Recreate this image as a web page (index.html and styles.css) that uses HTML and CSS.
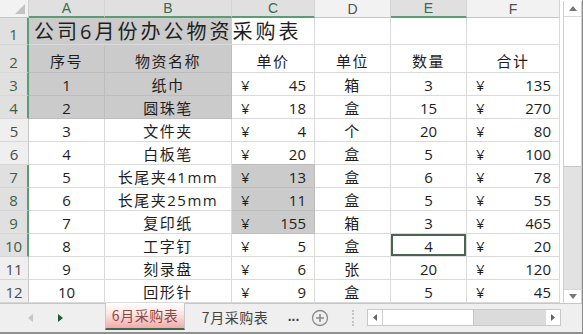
FILE: index.html
```html
<!DOCTYPE html>
<html lang="zh">
<head>
<meta charset="utf-8">
<title>公司6月份办公物资采购表</title>
<link rel="stylesheet" href="styles.css">
</head>
<body>
<div class="app">
  <div class="main">
    <div class="sheet">
      <div class="row hrow">
        <div class="corner"><svg width="10" height="10" viewBox="0 0 10 10"><polygon points="10,0 10,10 0,10" fill="#c2c2c2"/></svg></div>
        <div class="ch sel">A</div>
        <div class="ch sel">B</div>
        <div class="ch sel">C</div>
        <div class="ch">D</div>
        <div class="ch sel">E</div>
        <div class="ch">F</div>
      </div>
      <div class="row r1">
        <div class="rh sel">1</div>
        <div class="c title">公司6月份办公物资采购表</div>
        <div class="c"></div>
        <div class="c"></div>
        <div class="c"></div>
      </div>
      <div class="row r2">
        <div class="rh sel">2</div>
        <div class="c g t">序号</div>
        <div class="c g t">物资名称</div>
        <div class="c t">单价</div>
        <div class="c t">单位</div>
        <div class="c t">数量</div>
        <div class="c t">合计</div>
      </div>
      <div class="row">
        <div class="rh sel">3</div>
        <div class="c g">1</div>
        <div class="c g t">纸巾</div>
        <div class="c m"><span>¥</span><span>45</span></div>
        <div class="c t">箱</div>
        <div class="c">3</div>
        <div class="c m"><span>¥</span><span>135</span></div>
      </div>
      <div class="row">
        <div class="rh sel">4</div>
        <div class="c g">2</div>
        <div class="c g t">圆珠笔</div>
        <div class="c m"><span>¥</span><span>18</span></div>
        <div class="c t">盒</div>
        <div class="c">15</div>
        <div class="c m"><span>¥</span><span>270</span></div>
      </div>
      <div class="row">
        <div class="rh">5</div>
        <div class="c">3</div>
        <div class="c t">文件夹</div>
        <div class="c m"><span>¥</span><span>4</span></div>
        <div class="c t">个</div>
        <div class="c">20</div>
        <div class="c m"><span>¥</span><span>80</span></div>
      </div>
      <div class="row">
        <div class="rh">6</div>
        <div class="c">4</div>
        <div class="c t">白板笔</div>
        <div class="c m"><span>¥</span><span>20</span></div>
        <div class="c t">盒</div>
        <div class="c">5</div>
        <div class="c m"><span>¥</span><span>100</span></div>
      </div>
      <div class="row">
        <div class="rh sel">7</div>
        <div class="c">5</div>
        <div class="c t">长尾夹41mm</div>
        <div class="c m g gt"><span>¥</span><span>13</span></div>
        <div class="c t">盒</div>
        <div class="c">6</div>
        <div class="c m"><span>¥</span><span>78</span></div>
      </div>
      <div class="row">
        <div class="rh sel">8</div>
        <div class="c">6</div>
        <div class="c t">长尾夹25mm</div>
        <div class="c m g"><span>¥</span><span>11</span></div>
        <div class="c t">盒</div>
        <div class="c">5</div>
        <div class="c m"><span>¥</span><span>55</span></div>
      </div>
      <div class="row">
        <div class="rh sel">9</div>
        <div class="c">7</div>
        <div class="c t">复印纸</div>
        <div class="c m g"><span>¥</span><span>155</span></div>
        <div class="c t">箱</div>
        <div class="c">3</div>
        <div class="c m"><span>¥</span><span>465</span></div>
      </div>
      <div class="row">
        <div class="rh sel">10</div>
        <div class="c">8</div>
        <div class="c t">工字钉</div>
        <div class="c m"><span>¥</span><span>5</span></div>
        <div class="c t">盒</div>
        <div class="c act">4</div>
        <div class="c m"><span>¥</span><span>20</span></div>
      </div>
      <div class="row">
        <div class="rh">11</div>
        <div class="c">9</div>
        <div class="c t">刻录盘</div>
        <div class="c m"><span>¥</span><span>6</span></div>
        <div class="c t">张</div>
        <div class="c">20</div>
        <div class="c m"><span>¥</span><span>120</span></div>
      </div>
      <div class="row">
        <div class="rh">12</div>
        <div class="c">10</div>
        <div class="c t">回形针</div>
        <div class="c m"><span>¥</span><span>9</span></div>
        <div class="c t">盒</div>
        <div class="c">5</div>
        <div class="c m"><span>¥</span><span>45</span></div>
      </div>
    </div>
    <div class="vscroll">
      <div class="vs-in">
        <div class="vbtn"><svg width="8" height="5" viewBox="0 0 8 5"><polygon points="4,0 8,5 0,5" fill="#777"/></svg></div>
        <div class="vthumb"></div>
        <div class="vtrack"></div>
        <div class="vbtn"><svg width="8" height="5" viewBox="0 0 8 5"><polygon points="0,0 8,0 4,5" fill="#777"/></svg></div>
      </div>
    </div>
  </div>
  <div class="bar">
    <div class="nav">
      <svg class="nl" width="5" height="8" viewBox="0 0 5 8"><polygon points="5,0 5,8 0,4" fill="#c4c4c4"/></svg>
      <svg class="nr" width="5" height="8" viewBox="0 0 5 8"><polygon points="0,0 5,4 0,8" fill="#1e5a38"/></svg>
    </div>
    <div class="tab on">6月采购表</div>
    <div class="tab">7月采购表</div>
    <div class="more">...</div>
    <div class="add"><svg width="18" height="18" viewBox="0 0 18 18"><circle cx="9" cy="9" r="7.5" fill="none" stroke="#8a8a8a" stroke-width="1.3"/><path d="M9 5v8M5 9h8" stroke="#8a8a8a" stroke-width="1.6"/></svg></div>
    <div class="sep"><span></span></div>
    <div class="hs">
      <div class="hbtn"><svg width="4" height="7" viewBox="0 0 4 7"><polygon points="4,0 4,7 0,3.5" fill="#666"/></svg></div>
      <div class="hthumb"></div>
      <div class="htrack"></div>
      <div class="hbtn"><svg width="4" height="7" viewBox="0 0 4 7"><polygon points="0,0 4,3.5 0,7" fill="#666"/></svg></div>
    </div>
  </div>
</div>
</body>
</html>
```

FILE: styles.css
```css
* { box-sizing: border-box; margin: 0; padding: 0; }
html, body { width: 583px; height: 334px; overflow: hidden; }
body {
  background: #fff;
  font-family: "Open Sans", "Noto Sans CJK SC", sans-serif;
  color: #1e1e1e;
}
.app {
  width: 583px;
  height: 334px;
  display: flex;
  flex-direction: column;
  border-right: 1px solid #8c8c8c;
}
.main { display: flex; height: 303px; }
.sheet { width: 560px; display: flex; flex-direction: column; }

.row {
  display: grid;
  grid-template-columns: 29px 76px 127px 83px 76px 76px 93px;
  height: 23px;
}
.hrow { height: 18px; background: #f2f2f2; }
.r1 { height: 27px; grid-template-columns: 29px 286px 76px 76px 93px; }
.r2 { height: 28px; }

.corner {
  border-right: 1px solid #cfcfcf;
  border-bottom: 1px solid #c4c4c4;
  display: flex;
  align-items: flex-end;
  justify-content: flex-end;
  padding: 0 3px 3px 0;
}
.ch {
  border-right: 1px solid #d4d4d4;
  border-bottom: 1px solid #c4c4c4;
  display: flex;
  align-items: center;
  justify-content: center;
  font-family: "Liberation Sans", sans-serif;
  font-size: 14px;
  color: #505050;
}
.ch.sel {
  background: #e0e0e0;
  border-bottom: 2px solid #5b9c74;
  color: #3a6a4c;
}

.rh {
  background: #efefef;
  border-right: 1px solid #c8c8c8;
  border-bottom: 1px solid #d6d6d6;
  display: flex;
  align-items: flex-end;
  justify-content: center;
  font-size: 15px;
  line-height: 20px;
  color: #4a4a4a;
}
.rh.sel {
  background: #e0e0e0;
  border-right: 2px solid #5b9c74;
  color: #3e5e4a;
}

.c {
  border-right: 1px solid #dadada;
  border-bottom: 1px solid #dadada;
  display: flex;
  align-items: center;
  justify-content: center;
  font-size: 15px;
  line-height: 20px;
  white-space: nowrap;
  padding-top: 1px;
}
.r2 .c { align-items: flex-end; padding-bottom: 1px; }
.t { letter-spacing: 1.5px; }
.g { background: #cbcbcb; border-color: #bdbdbd; }
.gt { border-top: 1px solid #bdbdbd; margin-top: -1px; }
.m { justify-content: space-between; padding-left: 9px; padding-right: 8px; }
.act { box-shadow: inset 0 0 0 2px #4a6354; }

.title {
  justify-content: flex-start;
  padding-left: 5px;
  font-size: 20px;
  letter-spacing: 3px;
  background: linear-gradient(to right, #cbcbcb 203px, #fff 203px);
}

.vscroll { width: 22px; padding: 1px 0 0 3px; background: #fff; }
.vs-in {
  height: 302px;
  display: flex;
  flex-direction: column;
  border-left: 1px solid #d0d0d0;
  border-right: 1px solid #d0d0d0;
  background: #e2e2e2;
}
.vbtn {
  height: 16px;
  background: #fff;
  display: flex;
  align-items: center;
  justify-content: center;
  border-bottom: 1px solid #d8d8d8;
}
.vbtn:last-child { border-bottom: 0; border-top: 1px solid #d8d8d8; height: 14px; }
.vthumb { height: 150px; background: #fff; border-bottom: 1px solid #c8c8c8; }
.vtrack { flex: 1; }

.bar {
  height: 31px;
  display: flex;
  background: #efefef;
  border-top: 1px solid #c6c6c6;
  border-bottom: 2px solid #909090;
  font-family: "Noto Sans CJK SC", sans-serif;
  font-size: 14px;
}
.nav {
  width: 105px;
  display: flex;
  align-items: center;
  padding-left: 28px;
  gap: 25px;
}
.tab {
  width: 100px;
  display: flex;
  align-items: center;
  justify-content: center;
  color: #444;
  letter-spacing: 0.5px;
  padding-bottom: 2px;
}
.tab.on {
  width: 80px;
  margin-top: -1px;
  height: 27px;
  background: linear-gradient(#ffffff 0%, #fbe3e3 45%, #f3aaaa 100%);
  border-left: 1px solid #c8c8c8;
  border-right: 1px solid #c8c8c8;
  border-bottom: 2px solid #3f6a50;
  color: #8d4a44;
}
.more {
  width: 17px;
  display: flex;
  align-items: center;
  justify-content: center;
  color: #444;
  font-family: "Liberation Sans", sans-serif;
  font-weight: bold;
  padding-bottom: 4px;
}
.add {
  width: 36px;
  display: flex;
  align-items: center;
  justify-content: center;
}
.sep {
  width: 29px;
  display: flex;
  align-items: center;
  justify-content: center;
}
.sep span {
  width: 2px;
  height: 16px;
  border-left: 2px dotted #c4c4c4;
}
.hs {
  width: 194px;
  height: 17px;
  margin-top: 5px;
  display: flex;
  border: 1px solid #c8c8c8;
  background: #dbdbdb;
}
.hbtn {
  width: 14px;
  background: #fff;
  display: flex;
  align-items: center;
  justify-content: center;
}
.hthumb { width: 92px; background: #fff; border-left: 1px solid #cfcfcf; border-right: 1px solid #c4c4c4; }
.htrack { flex: 1; }
```
